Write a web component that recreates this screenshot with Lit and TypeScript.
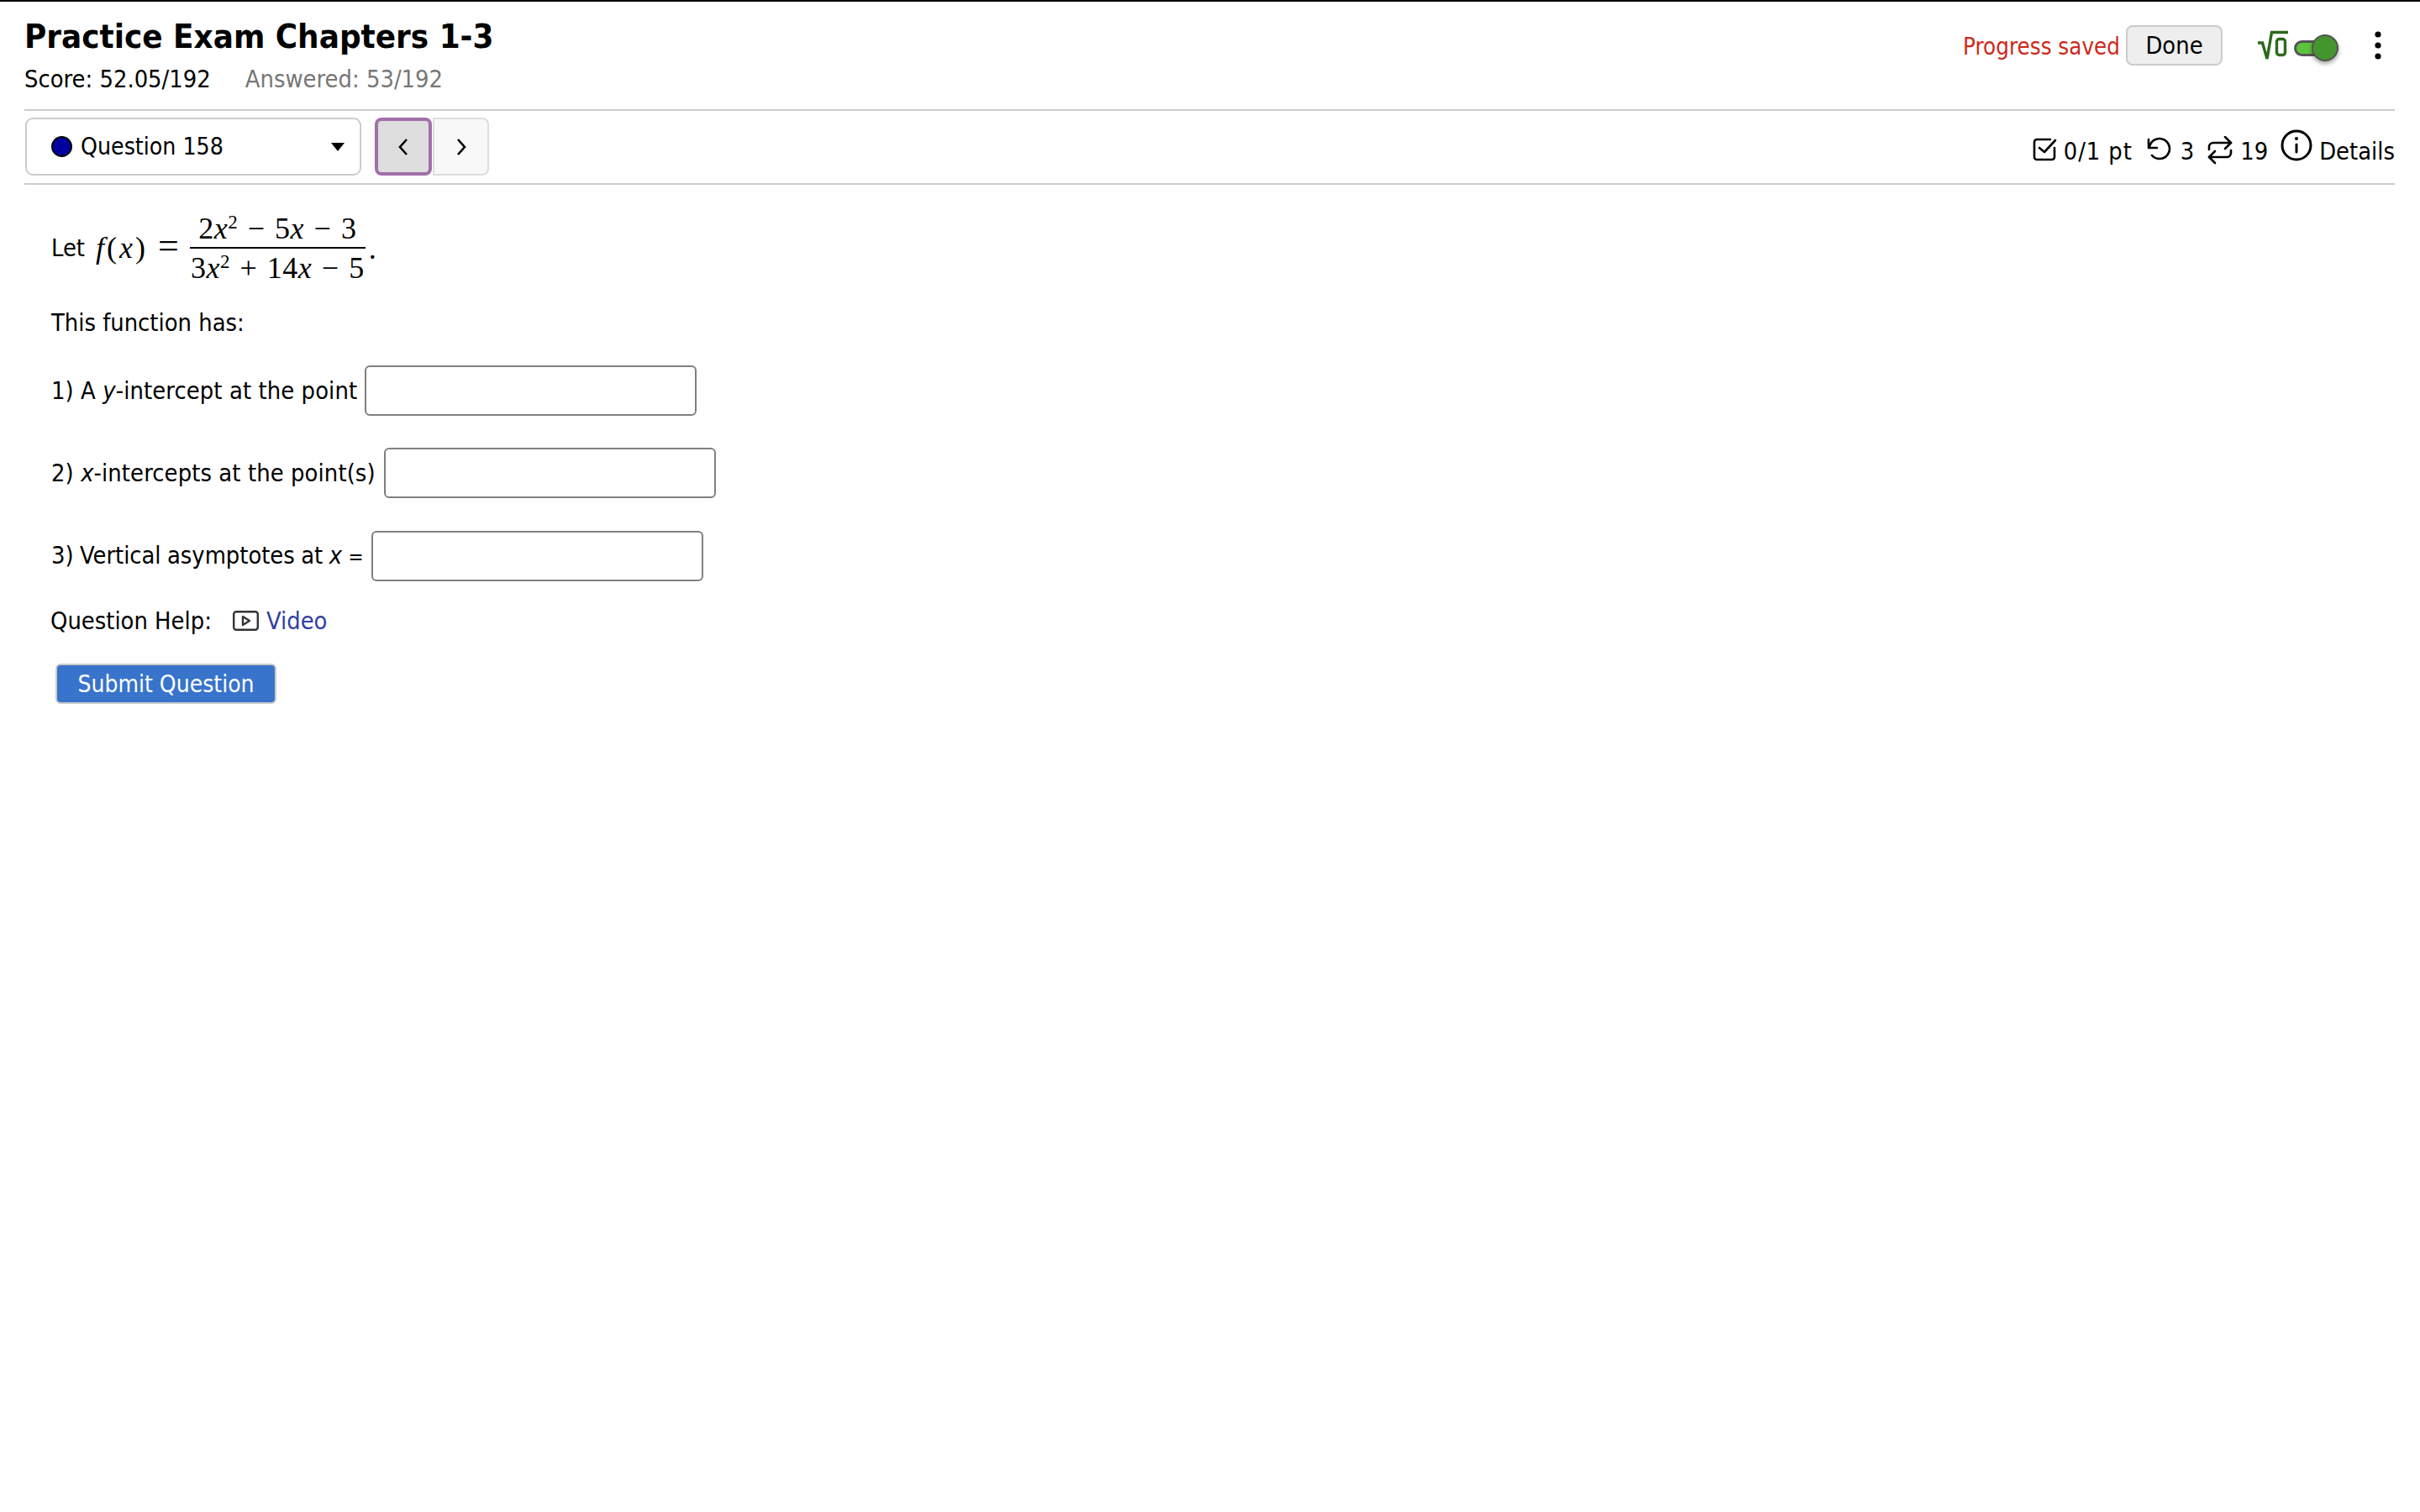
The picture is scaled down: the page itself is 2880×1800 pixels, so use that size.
import { LitElement, html, css } from "lit";
import { customElement } from "lit/decorators.js";

@customElement("app-root")
export class AppRoot extends LitElement {
  static styles = css`
    :host { display: block; min-height: 1800px; background: #fff; color: #000; box-sizing: border-box; border-top: 2px solid #000;
      font-family: "DejaVu Sans Condensed", "DejaVu Sans", sans-serif; font-stretch: condensed; font-size: 28.8px; line-height: 40px; }
    * { box-sizing: border-box; }
    .page { padding: 0 30px 0 29px; }
    .head { display: flex; justify-content: space-between; height: 130px; border-bottom: 2px solid #ccc; }
    h1 { margin: 0; padding-top: 16px; font-size: 39.9px; line-height: 50px; font-weight: 700; }
    .score { display: flex; gap: 41px; margin-top: 6px; }
    .muted { color: #777; }
    .tools { display: flex; align-items: flex-start; padding: 28px 16px 0 0; }
    .saved { color: #cc2a1c; margin-right: 7px; margin-top: 5px; font-size: 27.5px; }
    .done { width: 115px; height: 48px; background: #eee; border: 2px solid #ccc; border-radius: 8px; font: inherit; padding: 0; color: #000; }
    .sq { margin-left: 41px; margin-top: 5px; display: block; }
    .toggle { position: relative; width: 53px; height: 19px; margin: 18px 0 0 6px; background: #5cc43c; border: 3px solid #555; border-radius: 10px; }
    .knob { position: absolute; right: -3px; top: -10px; width: 32px; height: 32px; border-radius: 50%; background: #43962e; border: 2px solid #555; box-shadow: 0 3px 5px rgba(0,0,0,.35); }
    .dots { margin-left: 43px; margin-top: 7px; display: block; }
    .nav { display: flex; justify-content: space-between; height: 88px; border-bottom: 2px solid #ccc; padding-top: 8px; }
    .navl { display: flex; }
    .sel { width: 400px; height: 69px; margin-left: 1px; border: 2px solid #ccc; border-radius: 9px; display: flex; align-items: center; padding: 0 18px 0 29px; font-size: 28.2px; }
    .sel-label { padding-top: 1px; }
    .dot { width: 25px; height: 25px; border-radius: 50%; background: #0000a0; border: 2px solid #000; margin-right: 10px; }
    .arrow { width: 0; height: 0; margin-left: auto; border-left: 8px solid transparent; border-right: 8px solid transparent; border-top: 10px solid #000; }
    .btn { height: 69px; display: flex; align-items: center; justify-content: center; padding: 0; }
    .prev { width: 68px; margin-left: 16px; background: #ddd; border: 4px solid #a070a8; border-radius: 8px; }
    .next { width: 67px; margin-left: 1px; background: #f8f8f8; border: 2px solid #ddd; border-radius: 0 8px 8px 0; }
    .meta { display: flex; align-items: flex-start; padding-top: 14px; }
    .meta svg { display: block; flex: none; }
    .meta span { margin-top: 6px; }
    .meta .pts { letter-spacing: .9px; }
    .i-check { margin: 9px 8px 0 0; }
    .i-undo { margin: 9px 11px 0 16px; }
    .i-rep { margin: 8px 9px 0 16px; }
    .i-info { margin: 0 8px 0 15px; }
    .body { padding: 0 0 0 32px; }
    .math { display: flex; align-items: center; height: 90px; margin-top: 30px; font-family: "Liberation Serif", serif; font-size: 36px; line-height: 40px; }
    .let { font-family: "DejaVu Sans Condensed", "DejaVu Sans", sans-serif; font-size: 28.8px; margin-right: 13px; }
    .fx { letter-spacing: 3px; white-space: pre; }
    .big { font-size: 44px; line-height: 0; letter-spacing: 0; }
    i { font-style: italic; }
    .frac { display: flex; flex-direction: column; flex: none; align-items: stretch; text-align: center; width: 209px; margin-left: 13px; letter-spacing: .5px; word-spacing: 2px; }
    .num { height: 44px; white-space: pre; line-height: 45px; }
    .den { height: 46px; border-top: 2px solid #000; white-space: pre; line-height: 46px; }
    sup { font-size: 23px; line-height: 0; vertical-align: 12px; }
    .period { margin-left: 4px; margin-top: 2px; }
    p { margin: 0; }
    .has { margin-top: 24px; }
    .q { display: flex; align-items: center; height: 60px; letter-spacing: .1px; }
    .q input { width: 395px; height: 60px; margin-left: 9px; border: 2px solid #808080; border-radius: 6px; background: #fff; padding: 0; }
    .eq { font-size: 24px; }
    .q1 { margin-top: 31px; } .q2 { margin-top: 38px; } .q3 { margin-top: 39px; letter-spacing: -.03px; word-spacing: -.7px; }
    .q2 input { margin-left: 10px; }
    .help { display: flex; align-items: center; margin-top: 27px; margin-left: -1px; }
    .help svg { margin-left: 25px; margin-right: 9px; display: block; }
    .help a { color: #2f3ea8; text-decoration: none; }
    .submit { display: block; width: 263px; height: 48px; margin: 31px 0 0 5px; background: #3874cb; color: #fff; border: 2px solid #ccc; border-radius: 6px; font: inherit; font-size: 28px; padding: 2px 0 0; }
  `;

  render() {
    return html`<div class="page">
      <header class="head">
        <div>
          <h1>Practice Exam Chapters 1-3</h1>
          <div class="score"><span>Score: 52.05/192</span><span class="muted">Answered: 53/192</span></div>
        </div>
        <div class="tools">
          <span class="saved">Progress saved</span>
          <button class="done">Done</button>
          <svg class="sq" width="38" height="38" viewBox="0 0 38 38" fill="none" stroke="#2a6a1c" stroke-width="3.4"><path d="M1 16h5.5L12 35 17.5 3.5H37"/><rect x="23.5" y="11.5" width="10" height="19" rx="3"/></svg>
          <div class="toggle"><div class="knob"></div></div>
          <svg class="dots" width="8" height="34" viewBox="0 0 8 34" fill="#000"><circle cx="4" cy="4" r="3.6"/><circle cx="4" cy="17" r="3.6"/><circle cx="4" cy="30" r="3.6"/></svg>
        </div>
      </header>
      <nav class="nav">
        <div class="navl">
          <div class="sel"><span class="dot"></span><span class="sel-label">Question 158</span><span class="arrow"></span></div>
          <button class="btn prev"><svg width="14" height="22" viewBox="0 0 14 22" fill="none" stroke="#000" stroke-width="2.6"><path d="M11 2 3 11l8 9"/></svg></button>
          <button class="btn next"><svg width="14" height="22" viewBox="0 0 14 22" fill="none" stroke="#000" stroke-width="2.6"><path d="m3 2 8 9-8 9"/></svg></button>
        </div>
        <div class="meta">
          <svg class="i-check" width="29" height="29" viewBox="0 0 29 29" fill="none" stroke="#000" stroke-width="2.6" stroke-linecap="round" stroke-linejoin="round"><path d="M26 13v11a3 3 0 0 1-3 3H5a3 3 0 0 1-3-3V6a3 3 0 0 1 3-3h16"/><path d="m8 13 6 5L27 4"/></svg>
          <span class="pts">0/1 pt</span>
          <svg class="i-undo" width="30" height="30" viewBox="0 0 30 30" fill="none" stroke="#000" stroke-width="2.6" stroke-linecap="round" stroke-linejoin="round"><path d="M4 13A12 12 0 1 1 7 22"/><path d="M3 3v10h10"/></svg>
          <span>3</span>
          <svg class="i-rep" width="30" height="34" viewBox="0 0 30 34" fill="none" stroke="#000" stroke-width="2.6" stroke-linecap="round" stroke-linejoin="round"><path d="M2 16v-3a5 5 0 0 1 5-5h21"/><path d="m21 1 7 7-7 7"/><path d="M28 17v3a5 5 0 0 1-5 5H2"/><path d="m9 18-7 7 7 7"/></svg>
          <span>19</span>
          <svg class="i-info" width="38" height="38" viewBox="0 0 38 38" fill="none" stroke="#000" stroke-width="3" stroke-linecap="round"><circle cx="19" cy="19" r="17"/><path d="M19 18v9"/><circle cx="19" cy="11" r="1" fill="#000" stroke-width="2"/></svg>
          <span>Details</span>
        </div>
      </nav>
      <main class="body">
        <div class="math">
          <span class="let">Let</span>
          <span class="fx"><i>f</i>(<i>x</i>) <span class="big">=</span></span>
          <span class="frac">
            <span class="num">2<i>x</i><sup>2</sup> − 5<i>x</i> − 3</span>
            <span class="den">3<i>x</i><sup>2</sup> + 14<i>x</i> − 5</span>
          </span>
          <span class="period">.</span>
        </div>
        <p class="has">This function has:</p>
        <div class="q q1"><span>1) A <i>y</i>-intercept at the point</span><input /></div>
        <div class="q q2"><span>2) <i>x</i>-intercepts at the point(s)</span><input /></div>
        <div class="q q3"><span>3) Vertical asymptotes at <i>x</i> <span class="eq">=</span></span><input /></div>
        <div class="help"><span>Question Help:</span>
          <svg width="31" height="24" viewBox="0 0 31 24" fill="none" stroke="#333" stroke-width="2.4" stroke-linejoin="round"><rect x="1.2" y="1.2" width="28.6" height="21.6" rx="3"/><path d="M12 7v10l8-5z"/></svg>
          <a href="#">Video</a></div>
        <button class="submit">Submit Question</button>
      </main>
    </div>`;
  }
}
